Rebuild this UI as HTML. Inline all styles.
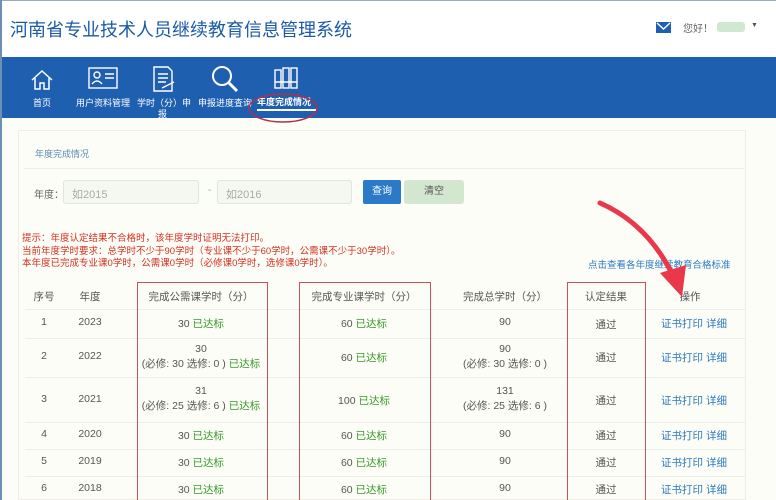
<!DOCTYPE html>
<html><head><meta charset="utf-8"><style>
*{margin:0;padding:0;box-sizing:border-box}
html,body{width:776px;height:500px;overflow:hidden}
body{background:#fdfdf8;font-family:"Liberation Sans","Noto Sans CJK SC",sans-serif;position:relative}
.a{position:absolute;white-space:nowrap}
.hdr{left:0;top:0;width:776px;height:57px;background:#fff;border-top:1px solid #9ab}
.nav{left:0;top:57px;width:776px;height:61px;background:#1f5fb0}
.t{position:absolute;white-space:nowrap;color:#fff;font-size:9px}
.g{color:#3a9a2a}
.c{text-align:center;transform:translateX(-50%);font-size:10.5px;color:#555}
.rb{border:1.5px solid #c8505a;position:absolute}
.ln{position:absolute;left:25px;width:720px;height:1px;background:#eeeee8}
.lk{color:#2a7ac0}
</style></head><body>
<div class="a hdr"></div>
<div class="a" style="left:0;top:0;width:2px;height:500px;background:#6b8fb5;z-index:5"></div>
<div class="a" style="left:10px;top:16px;font-size:18px;color:#1b5aa8">河南省专业技术人员继续教育信息管理系统</div>
<div class="a" style="left:656px;top:22px;width:15px;height:11px;background:#1f5fb0"></div>
<svg class="a" style="left:656px;top:22px" width="15" height="11"><path d="M1 1 L7.5 7 L14 1" stroke="#fff" stroke-width="1.4" fill="none"/></svg>
<div class="a" style="left:683px;top:20px;font-size:10px;color:#666">您好！</div>
<div class="a" style="left:717px;top:22px;width:28px;height:10px;background:#cfe8cf;border-radius:3px"></div>
<div class="a" style="left:751px;top:22px;font-size:7px;color:#555">▼</div>
<div class="a nav"></div>
<svg class="a" style="left:30px;top:68px" width="24" height="24" fill="none" stroke="#fff" stroke-width="1.5"><path d="M2 12 L12 3 L22 12 M5 10 V21 H10 V15 H14 V21 H19 V10"/></svg>
<div class="t" style="left:33px;top:96px">首页</div>
<svg class="a" style="left:88px;top:66px" width="30" height="26" fill="none" stroke="#fff" stroke-width="1.4"><rect x="1" y="2" width="28" height="20"/><circle cx="9" cy="9" r="3"/><path d="M4 18 Q9 12 14 18 M17 8 H26 M17 12 H26"/></svg>
<div class="t" style="left:76px;top:96px">用户资料管理</div>
<svg class="a" style="left:150px;top:65px" width="26" height="28" fill="none" stroke="#fff" stroke-width="1.4"><path d="M4 2 H18 L22 6 V26 H4 Z M8 9 H18 M8 13 H18 M8 17 H16 M12 23 L24 17"/></svg>
<div class="t" style="left:137px;top:96px">学时（分）申</div>
<div class="t" style="left:158px;top:107px">报</div>
<svg class="a" style="left:210px;top:64px" width="30" height="30" fill="none" stroke="#fff" stroke-width="2"><circle cx="12" cy="12" r="9"/><path d="M19 19 L27 27" stroke-width="3"/></svg>
<div class="t" style="left:198px;top:96px">申报进度查询</div>
<svg class="a" style="left:273px;top:66px" width="28" height="24" fill="none" stroke="#fff" stroke-width="1.4"><rect x="2" y="4" width="6" height="18"/><rect x="10" y="2" width="6" height="20"/><rect x="18" y="2" width="6" height="20"/><path d="M2 16 H24"/></svg>
<div class="t" style="left:257px;top:95px;font-weight:bold">年度完成情况</div>
<div class="a" style="left:257px;top:109px;width:59px;height:2px;background:#fff"></div>
<svg class="a" style="left:245px;top:86px" width="80" height="40"><ellipse cx="38" cy="22" rx="34" ry="14" fill="none" stroke="#b0304a" stroke-width="1.5"/></svg>
<div class="a" style="left:18px;top:130px;width:728px;height:370px;border:1px solid #eeeee6;background:#fdfdf8"></div>
<div class="a" style="left:35px;top:147px;font-size:9px;color:#5a8ab0">年度完成情况</div>
<div class="a" style="left:24px;top:168px;width:720px;height:1px;background:#eee"></div>
<div class="a" style="left:34px;top:186px;font-size:10px;color:#666">年度：</div>
<div class="a" style="left:63px;top:180px;width:136px;height:24px;border:1px solid #dde8d8;background:#f4f8ee;border-radius:3px;font-size:11px;color:#aaa;padding:5px 0 0 8px">如2015</div>
<div class="a" style="left:208px;top:185px;font-size:10px;color:#999">-</div>
<div class="a" style="left:217px;top:180px;width:135px;height:24px;border:1px solid #dde8d8;background:#f4f8ee;border-radius:3px;font-size:11px;color:#aaa;padding:5px 0 0 8px">如2016</div>
<div class="a" style="left:363px;top:180px;width:38px;height:24px;background:#2a7ac8;border-radius:2px;color:#fff;font-size:10px;text-align:center;line-height:24px">查询</div>
<div class="a" style="left:404px;top:180px;width:60px;height:24px;background:#d3e6d0;border-radius:3px;color:#555;font-size:10px;text-align:center;line-height:24px">清空</div>
<div class="a" style="left:22px;top:233px;font-size:9.5px;color:#d43020;line-height:12.5px">提示：年度认定结果不合格时，该年度学时证明无法打印。<br>当前年度学时要求：总学时不少于90学时（专业课不少于60学时，公需课不少于30学时）。<br>本年度已完成专业课0学时，公需课0学时（必修课0学时，选修课0学时）。</div>
<div class="a lk" style="left:588px;top:257px;font-size:9.5px">点击查看各年度继续教育合格标准</div>
<div class="ln" style="top:309px"></div><div class="ln" style="top:338px"></div><div class="ln" style="top:377px"></div><div class="ln" style="top:422px"></div><div class="ln" style="top:449px"></div><div class="ln" style="top:476px"></div>
<div class="a c" style="left:44px;top:289px">序号</div><div class="a c" style="left:90px;top:289px">年度</div>
<div class="a c" style="left:201px;top:289px">完成公需课学时（分）</div><div class="a c" style="left:364px;top:289px">完成专业课学时（分）</div>
<div class="a c" style="left:505px;top:289px">完成总学时（分）</div><div class="a c" style="left:606px;top:289px">认定结果</div><div class="a c" style="left:690px;top:289px">操作</div>

<div class="a c" style="left:44px;top:316px">1</div><div class="a c" style="left:90px;top:316px">2023</div><div class="a c" style="left:201px;top:316px">30 <span class="g">已达标</span></div><div class="a c" style="left:364px;top:316px">60 <span class="g">已达标</span></div><div class="a c" style="left:505px;top:316px">90</div><div class="a c" style="left:606px;top:317px">通过</div><div class="a c" style="left:694px;top:316px;color:#2a7ac0">证书打印 详细</div>

<div class="a c" style="left:44px;top:350px">2</div><div class="a c" style="left:90px;top:350px">2022</div><div class="a c" style="left:201px;top:342px;line-height:15px;text-align:center">30<br>(必修: 30 选修: 0 ) <span class="g">已达标</span></div><div class="a c" style="left:364px;top:350px">60 <span class="g">已达标</span></div><div class="a c" style="left:505px;top:342px;line-height:15px;text-align:center">90<br>(必修: 30 选修: 0 )</div><div class="a c" style="left:606px;top:350px">通过</div><div class="a c" style="left:694px;top:350px;color:#2a7ac0">证书打印 详细</div>

<div class="a c" style="left:44px;top:393px">3</div><div class="a c" style="left:90px;top:393px">2021</div><div class="a c" style="left:201px;top:384px;line-height:15px;text-align:center">31<br>(必修: 25 选修: 6 ) <span class="g">已达标</span></div><div class="a c" style="left:364px;top:393px">100 <span class="g">已达标</span></div><div class="a c" style="left:505px;top:384px;line-height:15px;text-align:center">131<br>(必修: 25 选修: 6 )</div><div class="a c" style="left:606px;top:393px">通过</div><div class="a c" style="left:694px;top:393px;color:#2a7ac0">证书打印 详细</div>

<div class="a c" style="left:44px;top:428px">4</div><div class="a c" style="left:90px;top:428px">2020</div><div class="a c" style="left:201px;top:428px">30 <span class="g">已达标</span></div><div class="a c" style="left:364px;top:428px">60 <span class="g">已达标</span></div><div class="a c" style="left:505px;top:428px">90</div><div class="a c" style="left:606px;top:428px">通过</div><div class="a c" style="left:694px;top:428px;color:#2a7ac0">证书打印 详细</div>

<div class="a c" style="left:44px;top:455px">5</div><div class="a c" style="left:90px;top:455px">2019</div><div class="a c" style="left:201px;top:455px">30 <span class="g">已达标</span></div><div class="a c" style="left:364px;top:455px">60 <span class="g">已达标</span></div><div class="a c" style="left:505px;top:455px">90</div><div class="a c" style="left:606px;top:455px">通过</div><div class="a c" style="left:694px;top:455px;color:#2a7ac0">证书打印 详细</div>

<div class="a c" style="left:44px;top:482px">6</div><div class="a c" style="left:90px;top:482px">2018</div><div class="a c" style="left:201px;top:482px">30 <span class="g">已达标</span></div><div class="a c" style="left:364px;top:482px">60 <span class="g">已达标</span></div><div class="a c" style="left:505px;top:482px">90</div><div class="a c" style="left:606px;top:482px">通过</div><div class="a c" style="left:694px;top:482px;color:#2a7ac0">证书打印 详细</div>

<div class="rb" style="left:137px;top:282px;width:131px;height:230px"></div>
<div class="rb" style="left:299px;top:282px;width:132px;height:230px"></div>
<div class="rb" style="left:567px;top:282px;width:79px;height:230px"></div>
<svg class="a" style="left:590px;top:195px" width="110" height="110"><path d="M10 8 Q60 30 85 85" stroke="#e8384a" stroke-width="5" fill="none" stroke-linecap="round"/><path d="M70 78 L92 102 L96 70 Z" fill="#e8384a"/></svg>
</body></html>
